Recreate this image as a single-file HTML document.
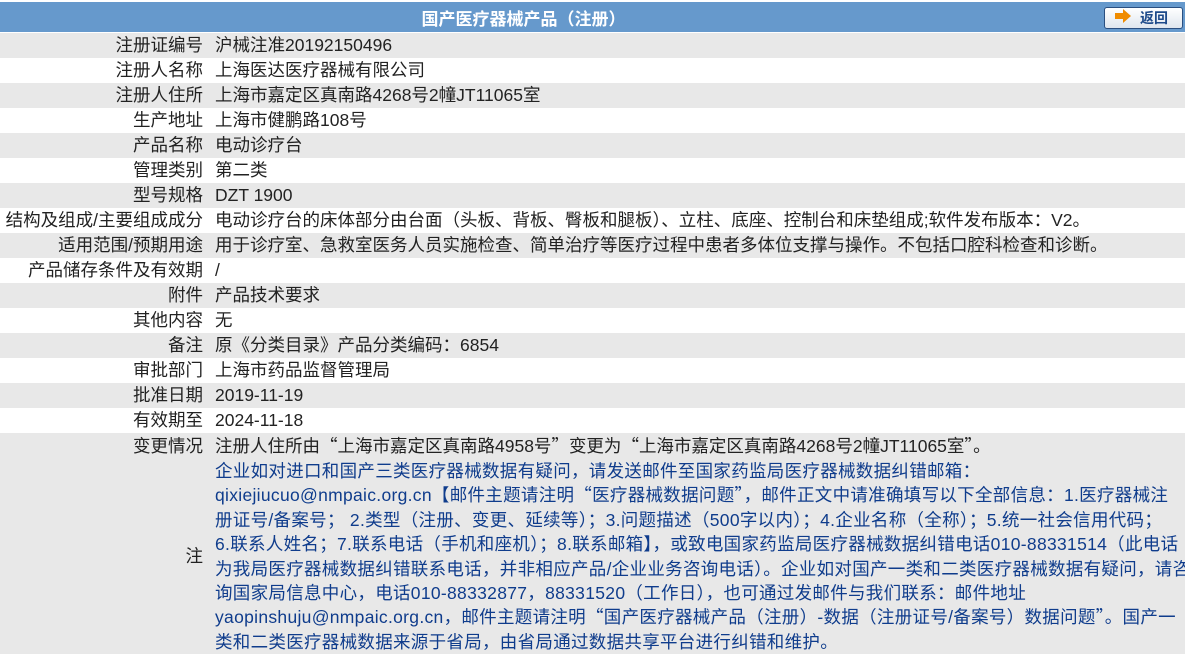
<!DOCTYPE html>
<html><head><meta charset="utf-8"><style>
body{margin:0;background:#fff;font-family:"Liberation Sans","Noto Sans CJK SC",sans-serif;color:#222;width:1190px;height:659px;overflow:hidden;position:relative}
.hd{position:absolute;left:0;top:2px;width:1185px;height:30px;background:#6699cc}
.hd .t{position:absolute;left:0;width:1047px;text-align:center;top:3px;color:#fff;font-weight:bold;font-size:17px}
.btn{position:absolute;left:1104px;top:5px;width:79px;height:22px;border:1px solid #2a4f80;border-radius:3px;background:linear-gradient(#fff,#dfe6ee);box-sizing:border-box}
.btn .ar{position:absolute;left:10px;top:5px;width:8px;height:6px;background:#f08c00}
.btn .ar:after{content:"";position:absolute;left:8px;top:-4px;border-left:8px solid #f08c00;border-top:7px solid transparent;border-bottom:7px solid transparent}
.btn .tx{position:absolute;left:35px;top:0px;font-weight:bold;font-size:14px;color:#1d4a8a}
table{position:absolute;left:0;top:33px;width:1185px;border-collapse:collapse;font-size:17.5px;table-layout:fixed}
td{padding:0;height:25px;line-height:25px;vertical-align:middle;white-space:nowrap;overflow:visible}
td.l{text-align:right;padding-right:12px}
tr.g td{background:#e8e8e8}
.n{color:#0f3c8c;line-height:24.4px;overflow:hidden;letter-spacing:0.3px}
.q{font-family:"Noto Sans CJK SC",sans-serif}
</style></head><body>
<div class="hd"><div class="t">国产医疗器械产品（注册）</div>
<div class="btn"><div class="ar"></div><div class="tx">返回</div></div></div>
<table>
<colgroup><col style="width:215px"><col style="width:970px"></colgroup>
<tr class="g"><td class="l">注册证编号</td><td>沪械注准20192150496</td></tr>
<tr><td class="l">注册人名称</td><td>上海医达医疗器械有限公司</td></tr>
<tr class="g"><td class="l">注册人住所</td><td>上海市嘉定区真南路4268号2幢JT11065室</td></tr>
<tr><td class="l">生产地址</td><td>上海市健鹏路108号</td></tr>
<tr class="g"><td class="l">产品名称</td><td>电动诊疗台</td></tr>
<tr><td class="l">管理类别</td><td>第二类</td></tr>
<tr class="g"><td class="l">型号规格</td><td>DZT 1900</td></tr>
<tr><td class="l">结构及组成/主要组成成分</td><td>电动诊疗台的床体部分由台面（头板、背板、臀板和腿板）、立柱、底座、控制台和床垫组成;软件发布版本：V2。</td></tr>
<tr class="g"><td class="l">适用范围/预期用途</td><td>用于诊疗室、急救室医务人员实施检查、简单治疗等医疗过程中患者多体位支撑与操作。不包括口腔科检查和诊断。</td></tr>
<tr><td class="l">产品储存条件及有效期</td><td>/</td></tr>
<tr class="g"><td class="l">附件</td><td>产品技术要求</td></tr>
<tr><td class="l">其他内容</td><td>无</td></tr>
<tr class="g"><td class="l">备注</td><td>原《分类目录》产品分类编码：6854</td></tr>
<tr><td class="l">审批部门</td><td>上海市药品监督管理局</td></tr>
<tr class="g"><td class="l">批准日期</td><td>2019-11-19</td></tr>
<tr><td class="l">有效期至</td><td>2024-11-18</td></tr>
<tr class="g"><td class="l">变更情况</td><td>注册人住所由<span class="q">“</span>上海市嘉定区真南路4958号<span class="q">”</span>变更为<span class="q">“</span>上海市嘉定区真南路4268号2幢JT11065室<span class="q">”</span>。</td></tr>
<tr class="g"><td class="l">注</td><td class="n">企业如对进口和国产三类医疗器械数据有疑问，请发送邮件至国家药监局医疗器械数据纠错邮箱：<br>qixiejiucuo@nmpaic.org.cn【邮件主题请注明<span class="q">“</span>医疗器械数据问题<span class="q">”</span>，邮件正文中请准确填写以下全部信息：1.医疗器械注<br>册证号/备案号； 2.类型（注册、变更、延续等）；3.问题描述（500字以内）；4.企业名称（全称）；5.统一社会信用代码；<br>6.联系人姓名；7.联系电话（手机和座机）；8.联系邮箱】，或致电国家药监局医疗器械数据纠错电话010-88331514（此电话<br>为我局医疗器械数据纠错联系电话，并非相应产品/企业业务咨询电话）。企业如对国产一类和二类医疗器械数据有疑问，请咨<br>询国家局信息中心，电话010-88332877，88331520（工作日），也可通过发邮件与我们联系：邮件地址<br>yaopinshuju@nmpaic.org.cn，邮件主题请注明<span class="q">“</span>国产医疗器械产品（注册）-数据（注册证号/备案号）数据问题<span class="q">”</span>。国产一<br>类和二类医疗器械数据来源于省局，由省局通过数据共享平台进行纠错和维护。</td></tr>
</table>
</body></html>
